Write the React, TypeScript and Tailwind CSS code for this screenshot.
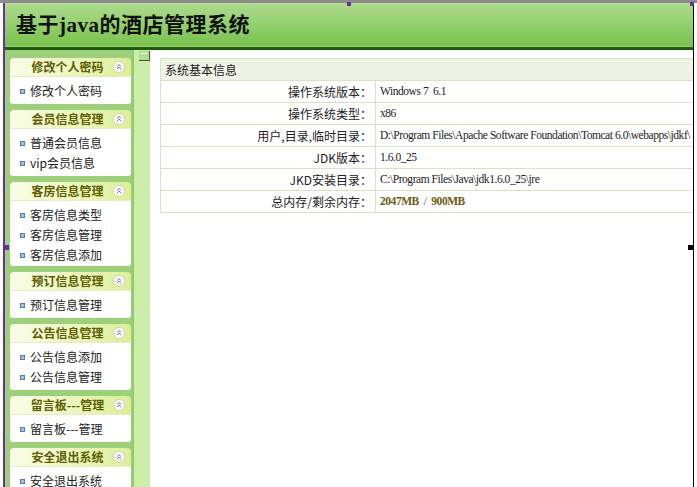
import React from "react";

const groups: { title: string; items: string[] }[] = [
  { title: "修改个人密码", items: ["修改个人密码"] },
  { title: "会员信息管理", items: ["普通会员信息", "vip会员信息"] },
  { title: "客房信息管理", items: ["客房信息类型", "客房信息管理", "客房信息添加"] },
  { title: "预订信息管理", items: ["预订信息管理"] },
  { title: "公告信息管理", items: ["公告信息添加", "公告信息管理"] },
  { title: "留言板---管理", items: ["留言板---管理"] },
  { title: "安全退出系统", items: ["安全退出系统"] },
];

const rows: { label: string; value: React.ReactNode }[] = [
  { label: "操作系统版本：", value: "Windows 7\u00a0\u00a06.1" },
  { label: "操作系统类型：", value: "x86" },
  { label: "用户,目录,临时目录：", value: "D:\\Program Files\\Apache Software Foundation\\Tomcat 6.0\\webapps\\jdkf\\" },
  { label: "JDK版本：", value: "1.6.0_25" },
  { label: "JKD安装目录：", value: "C:\\Program Files\\Java\\jdk1.6.0_25\\jre" },
  {
    label: "总内存/剩余内存：",
    value: (
      <span>
        <span className="text-[#6e5a10] font-bold">2047MB</span>
        <span className="text-[#555]">&nbsp;&nbsp;/&nbsp;&nbsp;</span>
        <span className="text-[#6e5a10] font-bold">900MB</span>
      </span>
    ),
  },
];

const cjk = { fontFamily: '"Noto Sans CJK SC", "Noto Sans", sans-serif' };
const serif = { fontFamily: '"Liberation Serif", "Noto Sans CJK SC", serif' };

function Collapse() {
  return (
    <svg width="12" height="12" viewBox="0 0 12 12">
      <circle cx="6" cy="6" r="5.5" fill="#ffffff" stroke="#c8c8b8" strokeWidth="0.8" />
      <path d="M3.8 5.6 L6 3.6 L8.2 5.6 M3.8 8.2 L6 6.2 L8.2 8.2" fill="none" stroke="#777" strokeWidth="1" />
    </svg>
  );
}

export default function App() {
  return (
    <div className="relative w-[697px] h-[487px] overflow-hidden bg-white" style={cjk}>
      <div className="h-[3px] bg-[#8d8d8d]" />
      <div className="absolute left-[347px] top-[2px] w-[4px] h-[4px] bg-[#6b2f9a]" />
      <div className="absolute left-[690px] top-[2px] w-[4px] h-[4px] bg-[#6b2f9a]" />
      <div className="flex flex-col h-[484px] ml-[3px] border-l-[2px] border-[#6b2f9a] border-r border-r-black w-[691px]">
        <div className="h-[43px] bg-gradient-to-b from-[#aedb8d] to-[#78c24c] flex items-center pl-[11px] pt-[3px]">
          <span className="text-[21px] font-bold text-[#111] tracking-[0.5px]" style={serif}>
            基于java的酒店管理系统
          </span>
        </div>
        <div className="h-[1px] bg-[#95d06b]" />
        <div className="h-[3px] bg-[#1e5a0e]" />
        <div className="flex flex-1 min-h-0">
          <div className="w-[127px] bg-[#9dd07a] pl-[5px] pr-[1px] pt-[8px] flex flex-col gap-[6px]">
            {groups.map((g) => (
              <div key={g.title} className="flex flex-col shrink-0">
                <div className="h-[19px] rounded-t-[4px] bg-gradient-to-r from-[#fbfde9] to-[#dcef95] border-b border-[#e4ecc8] flex items-center relative">
                  <span className="w-full text-center pr-[6px] text-[12px] font-bold text-[#5e5e00] leading-none">
                    {g.title}
                  </span>
                  <span className="absolute right-[6px] top-[3px] flex">
                    <Collapse />
                  </span>
                </div>
                <div className={`bg-white rounded-b-[3px] pt-[4px] ${g.items.length === 3 ? "pb-[1px]" : "pb-[3px]"}`}>
                  {g.items.map((it) => (
                    <div key={it} className="h-[20px] flex items-center pl-[10px]">
                      <span className="w-[5px] h-[5px] bg-[#9cc0e6] border border-[#5a7ea8] mr-[5px]" />
                      <span className="text-[12px] text-[#222] leading-none">{it}</span>
                    </div>
                  ))}
                </div>
              </div>
            ))}
          </div>
          <div className="w-[18px] bg-[#cdeeab] border-l-[2px] border-[#93cb6c] relative">
            <div className="absolute left-[5px] top-[1px] w-[11px] h-[10px] bg-[#b3df92] border-r border-b border-[#3d5a2c] flex justify-center">
              <div className="mt-[2px] w-[6px] h-[1px] bg-white" />
            </div>
          </div>
          <div className="flex-1 min-w-0 bg-white pt-[8px] pl-[10px] overflow-hidden">
            <table className="w-[calc(100%+2px)] table-fixed border-collapse text-[12px] text-[#222]">
              <colgroup>
                <col className="w-[215px]" />
                <col />
              </colgroup>
              <tbody>
                <tr className="h-[22px] bg-[#eef3e6]">
                  <td colSpan={2} className="border border-[#d9e3c4] pl-[4px]">
                    系统基本信息
                  </td>
                </tr>
                {rows.map((r) => (
                  <tr key={r.label} className="h-[22px]">
                    <td className="border border-[#d9e3c4] text-right pr-[3px] whitespace-nowrap">{r.label}</td>
                    <td className="border border-[#d9e3c4] pl-[4px] whitespace-nowrap text-[11.5px] tracking-[-0.45px]" style={serif}>
                      {r.value}
                    </td>
                  </tr>
                ))}
              </tbody>
            </table>
          </div>
        </div>
      </div>
      <div className="absolute left-[4px] top-[245px] w-[5px] h-[5px] bg-[#6b2f9a]" />
      <div className="absolute left-[688px] top-[245px] w-[5px] h-[5px] bg-black" />
    </div>
  );
}
